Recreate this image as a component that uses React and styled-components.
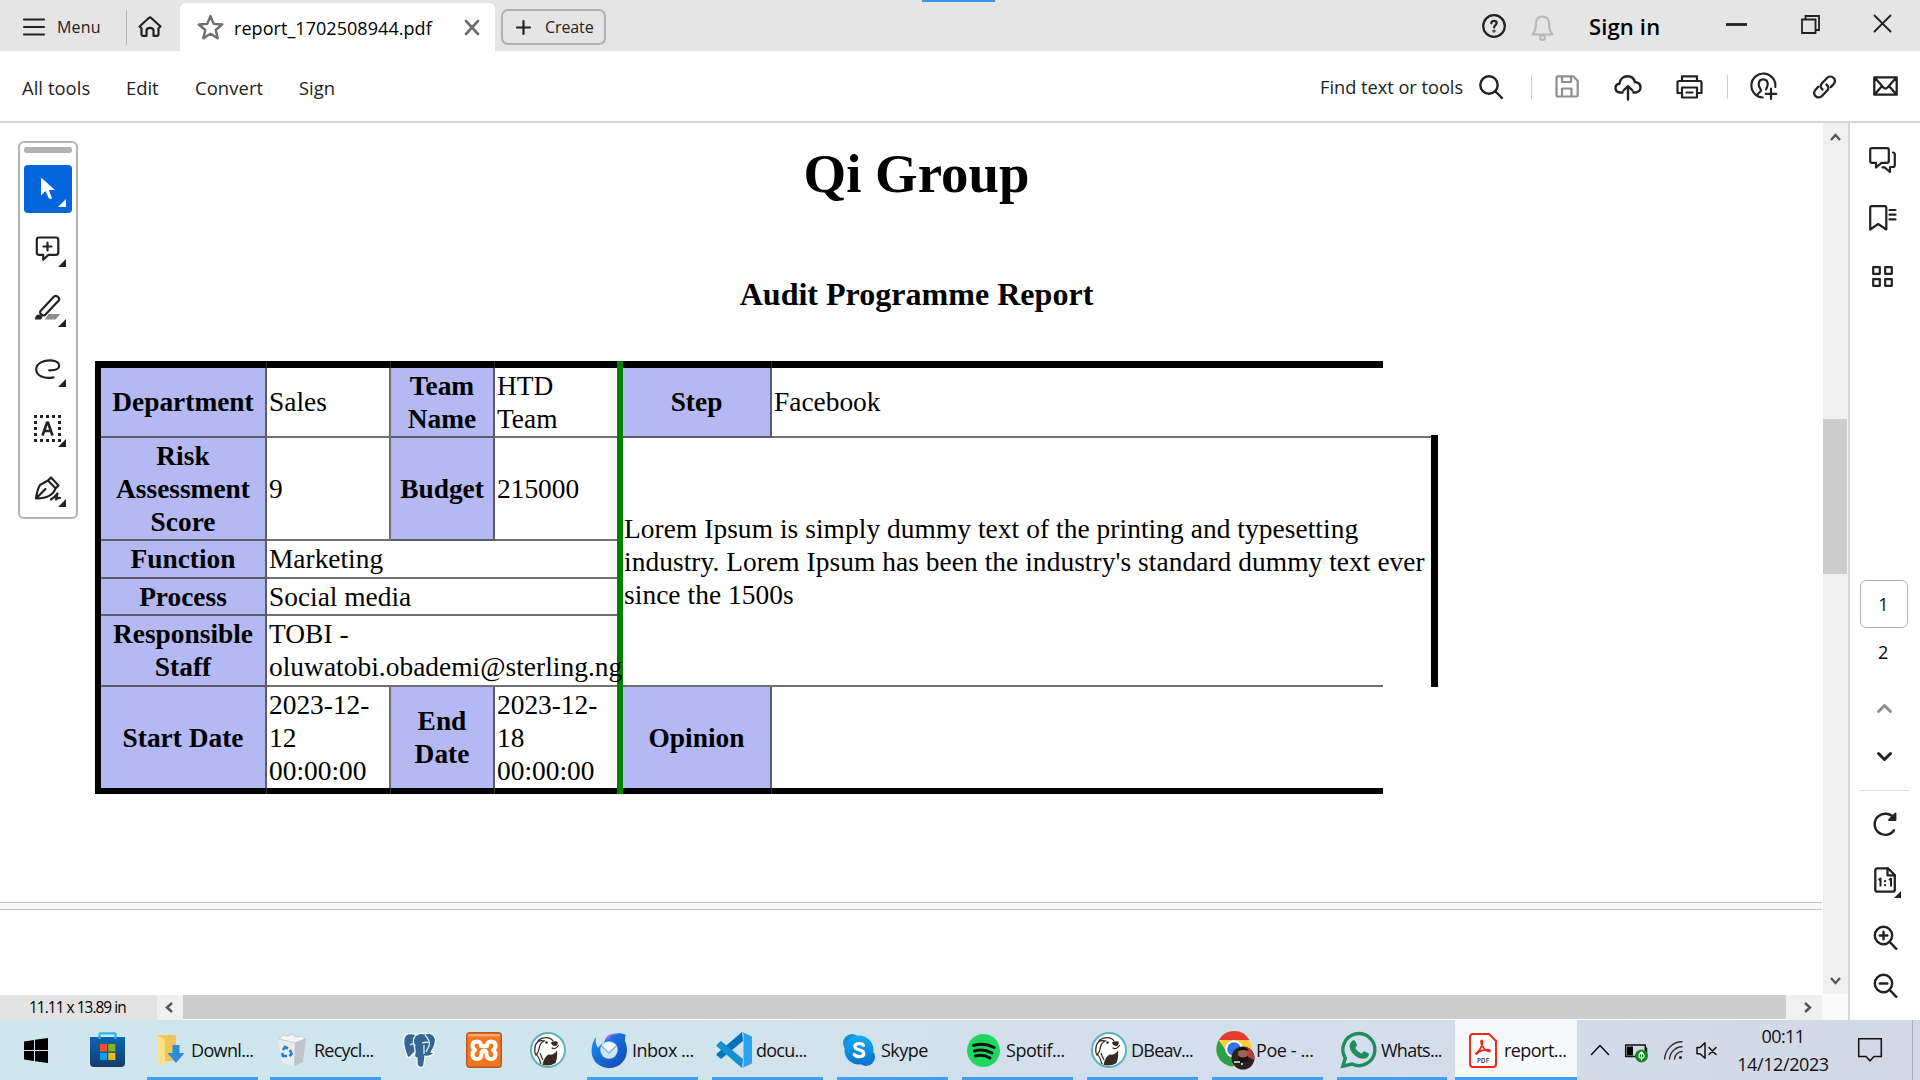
import React from "react";
import styled, { createGlobalStyle, css } from "styled-components";

const GlobalStyle = createGlobalStyle`
  * { box-sizing: border-box; }
  html, body { margin: 0; padding: 0; background: #fff; overflow: hidden; }
  svg { display: block; flex: none; }
`;

const ui = css`font-family: "Open Sans", "Noto Sans", sans-serif;`;
const INK = "#222";

const Window = styled.div`
  ${ui}
  width: 1920px;
  height: 1080px;
  display: flex;
  flex-direction: column;
  color: ${INK};
  background: #fff;
  overflow: hidden;
`;

const Label = styled.span`
  font-size: ${(p) => p.$size || 18}px;
  font-weight: ${(p) => p.$weight || 400};
  letter-spacing: ${(p) => p.$track || 0}px;
  color: ${(p) => p.$color || INK};
  margin-left: ${(p) => p.$ml || 0}px;
  margin-top: ${(p) => p.$mt || 0}px;
  width: ${(p) => (p.$w ? `${p.$w}px` : "auto")};
  line-height: 24px;
  white-space: nowrap;
  flex: none;
`;

const Svg = styled.svg.attrs((p) => ({
  width: p.$w,
  height: p.$h,
  viewBox: `0 0 ${p.$w} ${p.$h}`,
  fill: "none",
  strokeLinecap: "round",
  strokeLinejoin: "round",
}))`
  overflow: visible;
  margin-left: ${(p) => p.$ml || 0}px;
  margin-top: ${(p) => p.$mt || 0}px;
  stroke: ${(p) => p.$c || INK};
  stroke-width: ${(p) => p.$s || 2.2}px;
`;

const Art = styled.svg`
  overflow: visible;
  margin-left: ${(p) => p.$ml || 0}px;
`;

/* ---------- title bar ---------- */
const TitleBar = styled.header`
  height: 51px;
  flex: none;
  display: flex;
  align-items: flex-start;
  background: #e5e5e5;
  position: relative;
`;
const Accent = styled.div`
  position: absolute;
  left: 922px;
  top: 0;
  width: 73px;
  height: 2px;
  background: #3b95ea;
`;
const TitleDivider = styled.div`
  width: 1px;
  height: 35px;
  margin: 10px 0 0 26px;
  background: #b5b5b5;
`;
const Tab = styled.div`
  width: 315px;
  height: 48px;
  margin: 3px 0 0 18px;
  display: flex;
  align-items: flex-start;
  background: #fff;
  border-radius: 6px 6px 0 0;
`;
const CreateButton = styled.button`
  ${ui}
  width: 105px;
  height: 36px;
  margin: 9px 0 0 6px;
  padding: 0;
  border: 2px solid #b1b1b1;
  border-radius: 7px;
  background: transparent;
  display: flex;
  align-items: center;
`;
const TitleRight = styled.div`
  margin-left: auto;
  width: 438px;
  display: flex;
`;

/* ---------- tool bar ---------- */
const ToolBar = styled.nav`
  height: 72px;
  flex: none;
  display: flex;
  align-items: flex-start;
  border-bottom: 2px solid #d5d5d5;
`;
const ToolRight = styled.div`
  margin-left: auto;
  width: 600px;
  display: flex;
`;
const ToolDivider = styled.div`
  width: 1px;
  height: 24px;
  margin: 24px 0 0 ${(p) => p.$ml}px;
  background: #cfcfcf;
`;

/* ---------- body ---------- */
const Body = styled.div`
  height: 897px;
  flex: none;
  display: flex;
`;
const Viewer = styled.main`
  width: 1848px;
  display: flex;
  flex-direction: column;
`;
const ViewRow = styled.div`
  height: 871px;
  display: flex;
`;
const Canvas = styled.div`
  width: 1823px;
  height: 872px;
  display: flex;
  flex-direction: column;
  position: relative;
`;
const Page = styled.section`
  width: 1823px;
  height: 779px;
  overflow: hidden;
  font-family: "Liberation Serif", "Times New Roman", serif;
  color: #000;
`;
const PageGap = styled.div`
  width: 1822px;
  height: 8px;
  border-top: 1px solid #c6c6c6;
  border-bottom: 1px solid #c6c6c6;
  background: #f8f8f8;
`;
const Title = styled.h1`
  margin: 19px 0 0 10px;
  font-size: 54.8px;
  line-height: 64px;
  text-align: center;
`;
const Subtitle = styled.h2`
  margin: 69px 0 0 10px;
  font-size: 32.06px;
  line-height: 38px;
  text-align: center;
`;
const TableGrid = styled.div`
  margin: 48px 0 0 95px;
  width: 1343px;
  display: grid;
  grid-template-columns: 6px 166px 124px 104px 122px 6px 149px 611px 48px 7px;
  grid-template-rows: 7px 70px 103px 38px 37px 71px 101px 6px;
  font-size: 27.4px;
  line-height: 32.9px;
`;
const place = css`
  grid-column: ${(p) => p.$col};
  grid-row: ${(p) => p.$row};
`;
const Rule = styled.div`
  ${place}
  background: ${(p) => p.$bg || "#000"};
  margin-top: ${(p) => (p.$rise ? -p.$rise : 0)}px;
  border-right: ${(p) => (p.$tick ? "1px solid #333" : "none")};
`;
const Cell = styled.div`
  ${place}
  display: flex;
  align-items: center;
  white-space: pre;
  letter-spacing: ${(p) => p.$track || 0}px;
  padding-top: 1.6px;
  padding-left: ${(p) => (p.$pad === undefined ? 2 : p.$pad)}px;
  border-right: ${(p) => (p.$open ? "none" : "2px solid #707070")};
  border-bottom: ${(p) => (p.$last ? "none" : "2px solid #707070")};
`;
const Head = styled(Cell)`
  padding-left: 0;
  justify-content: center;
  text-align: center;
  font-weight: 700;
  background: #b5b9f3;
  border-color: #5c5c6c;
`;

/* ---------- floating quick tools ---------- */
const QuickTools = styled.aside`
  position: absolute;
  left: 18px;
  top: 18px;
  width: 60px;
  height: 378px;
  padding: 5px 4px 0;
  border: 2px solid #b3b3b3;
  border-radius: 6px;
  background: #fff;
  display: flex;
  flex-direction: column;
  gap: 12px;
`;
const Handle = styled.div`
  height: 6px;
  flex: none;
  border-radius: 3px;
  background: #b1b1b1;
  margin-top: -1px;
`;
const QuickButton = styled.div`
  height: 48px;
  flex: none;
  border-radius: 4px;
  background: ${(p) => (p.$active ? "#0265dc" : "transparent")};
`;

/* ---------- scroll bars ---------- */
const VScroll = styled.div`
  width: 25px;
  background: #f0f0f0;
  display: flex;
  flex-direction: column;
`;
const VThumb = styled.div`
  width: 24px;
  height: 155px;
  margin: 278px 0 403px;
  background: #cdcdcd;
`;
const HRow = styled.div`
  height: 26px;
  display: flex;
  padding-top: 1px;
`;
const Status = styled.div`
  width: 157px;
  height: 25px;
  padding: 1px 0 0 29px;
  background: #e3e3e3;
`;
const HButton = styled.div`
  width: ${(p) => p.$w}px;
  height: 25px;
  background: #f0f0f0;
`;
const HThumb = styled.div`
  width: 1603px;
  height: 24px;
  background: #cdcdcd;
`;
const Corner = styled.div`
  width: 26px;
  height: 26px;
  margin-top: -1px;
  background: #fafafa;
`;

/* ---------- right rail ---------- */
const Rail = styled.aside`
  width: 72px;
  border-left: 2px solid #d5d5d5;
  display: flex;
  flex-direction: column;
`;
const PageBox = styled.div`
  width: 48px;
  height: 48px;
  margin: 293px 0 0 10px;
  padding: 0 1px 1px 0;
  border: 1.5px solid #b1b1b1;
  border-radius: 6px;
  display: flex;
  align-items: center;
  justify-content: center;
`;
const RailLine = styled.div`
  width: 49px;
  height: 1px;
  margin: 29px 0 0 10px;
  background: #dedede;
`;

/* ---------- taskbar ---------- */
const Taskbar = styled.footer`
  height: 60px;
  flex: none;
  display: flex;
  background: linear-gradient(90deg, #cfe6ee 0, #d0e5ee 560px, #d3e0ec 1000px, #d3deec 1300px, #d4dbe8 1600px, #d2d8e6 1920px);
`;
const Task = styled.div`
  width: ${(p) => p.$w}px;
  margin-left: ${(p) => p.$ml || 0}px;
  padding-left: ${(p) => p.$pl || 0}px;
  height: 60px;
  flex: none;
  display: flex;
  align-items: center;
  background: ${(p) => (p.$active ? "#f6f8fc" : "transparent")};
  box-shadow: ${(p) => (p.$open ? "inset 0 -3px 0 #429eff" : "none")};
`;
const Clock = styled.div`
  width: 100px;
  margin-left: 11px;
  padding-top: 4px;
  display: flex;
  flex-direction: column;
  align-items: center;
  gap: 4px;
`;
const ShowDesktop = styled.div`
  width: 1px;
  height: 60px;
  margin-left: 30px;
  background: #a9b0bd;
`;

const Flyout = ({ c = INK }) => <path d="M42 34v8h-8z" fill={c} stroke="none" />;

const Dog = () => (
  <Art width="36" height="36" viewBox="0 0 36 36">
    <circle cx="18" cy="18" r="17" fill="#fff" stroke="#5bb5ba" strokeWidth="2" />
    <path d="M5.500 17c0-3 1.500-6 4-8M8 8.500c5-4 12-4 15 .5M22 16c2 1.500 5 0 6.500-2.500" fill="none" stroke="#382923" strokeWidth="1.200" strokeLinecap="round" />
    <path d="M14 9c-4-1-7 0-8.500 4-1 4-1 8 .5 10 1-1 2.500-3 3-6 .5-4 2-6.500 5-8z" fill="#fff" stroke="#382923" strokeWidth="1.300" />
    <path d="M12.500 33c1-4 2-8 6-10.500 3 .5 6 0 8.500-4 .5 5 0 9-1.500 12.500-4 2.500-8 3-13 2z" fill="#382923" />
    <path d="M6.500 22c2 3 3.500 6 4.500 10M10 21c1 3 2 5 3 7" fill="none" stroke="#382923" strokeWidth="1.200" />
    <path d="M21 10.500q3-2 6.500-1 .8 3-1.500 4.500-4.500 0-5-3.500z" fill="#382923" />
    <circle cx="16.500" cy="10.500" r="1.300" fill="#382923" />
  </Art>
);

const TaskLabel = ({ children, ml, track = -0.75 }) => (
  <Label $size={18} $track={track} $color="#111" $ml={ml}>{children}</Label>
);

function TopBar() {
  return (
    <TitleBar>
      <Accent />
      <Svg $w={21} $h={18} $ml={23} $mt={18}><path d="M1 1.500h20M1 9h20M1 16.500h20" /></Svg>
      <Label $size={16} $track={0.15} $ml={13} $mt={15} $w={43}>Menu</Label>
      <TitleDivider />
      <Svg $w={24} $h={21} $ml={11} $mt={16}>
        <path d="M1.500 10.500 10.800 2q1.200-1 2.400 0l9.300 8.500-2 1.800v6.200q0 1.300-1.300 1.300h-3.700v-5q0-3-3.500-3t-3.500 3v5H4.800q-1.300 0-1.300-1.300v-6.200z" />
      </Svg>
      <Tab>
        <Svg $w={27} $h={26} $ml={17} $mt={11} $c="#6e6e6e" $s={2.4}>
          <path d="m13.500 2 3.200 7.900 8.500.6-6.500 5.500 2 8.300-7.200-4.600-7.200 4.600 2-8.300L1.800 10.500l8.500-.6z" />
        </Svg>
        <Label $size={18} $track={0.05} $color="#000" $ml={10} $mt={13} $w={199}>report_1702508944.pdf</Label>
        <Svg $w={14} $h={15} $ml={32} $mt={17} $c="#6e6e6e" $s={2.6}><path d="m1 1 12 13M13 1 1 14" /></Svg>
      </Tab>
      <CreateButton>
        <Svg $w={15} $h={15} $ml={13}><path d="M7.500 1v13M1 7.500h13" /></Svg>
        <Label $size={16} $track={-0.1} $ml={14}>Create</Label>
      </CreateButton>
      <TitleRight>
        <Svg $w={24} $h={24} $mt={14}>
          <circle cx="12" cy="12" r="10.800" />
          <path d="M9.300 9.300q.2-2.500 2.700-2.500t2.700 2.300c0 1.700-2.600 2-2.600 4.300" />
          <circle cx="12" cy="17" r=".5" />
        </Svg>
        <Svg $w={23} $h={26} $ml={25} $mt={15} $c="#b8b8b8">
          <path d="M1.500 19.500h20c-2.600-3-3.300-5-3.300-9.500 0-5.500-2.500-8.500-6.700-8.500S4.800 4.500 4.800 10c0 4.500-.7 6.500-3.300 9.500z" />
          <circle cx="11.500" cy="22.700" r="2.300" />
        </Svg>
        <Label $size={22} $weight={600} $track={0.15} $color="#000" $ml={35} $mt={14} $w={72}>Sign in</Label>
        <Svg $w={21} $h={3} $ml={65} $mt={23} $s={2.8}><path d="M0 1.500h21" strokeLinecap="butt" /></Svg>
        <Svg $w={19} $h={19} $ml={54} $mt={15} $s={1.8}>
          <path d="M4.500 4.300V1H18v14h-3.300M1 4.500h13.500V18H1z" strokeLinejoin="miter" />
        </Svg>
        <Svg $w={17} $h={17} $ml={54} $mt={15} $s={1.8}><path d="m.5.5 16 16M16.500.5l-16 16" /></Svg>
      </TitleRight>
    </TitleBar>
  );
}

function Tools() {
  return (
    <ToolBar>
      <Label $size={18.4} $track={0.05} $ml={22} $mt={25} $w={104}>All tools</Label>
      <Label $size={18.4} $mt={25} $w={69}>Edit</Label>
      <Label $size={18.4} $track={0.1} $mt={25} $w={104}>Convert</Label>
      <Label $size={18.4} $mt={25}>Sign</Label>
      <ToolRight>
        <Label $size={18.2} $mt={24} $w={144}>Find text or tools</Label>
        <Svg $w={24} $h={24} $ml={15} $mt={24} $s={2.4}><circle cx="10" cy="10" r="8.700" /><path d="m16.500 16.500 6.500 6.500" /></Svg>
        <ToolDivider $ml={28} />
        <Svg $w={24} $h={23} $ml={23} $mt={24} $c="#8e8e8e">
          <path d="M1.500 2.500q0-1.200 1.200-1.200h15.500l4.500 4.500v14.500q0 1.200-1.200 1.200H2.700q-1.200 0-1.200-1.200zM7 1.500v5.500h9V1.500M7 21.500V13.500h9.500v8" />
        </Svg>
        <Svg $w={28} $h={25} $ml={35} $mt={24} $s={2.4}>
          <path d="M8.500 17.500H6q-4.500-.3-4.500-4.500 0-3.800 4-4.300C6 4 9.500 1.300 13.500 1.300c3.800 0 6.500 2 7.300 5.700 3.500.3 5.700 2.500 5.700 5.500 0 3-2.200 5-5.500 5h-1.500M14 24.500V12M9.500 15.500l4.500-4.300 4.500 4.300" />
        </Svg>
        <Svg $w={27} $h={24} $ml={34} $mt={24} $s={2.2}>
          <path d="M6 6V1.300h15V6M6 18H1.500V7.500q0-1.500 1.500-1.500h21q1.500 0 1.500 1.500V18H21M6 12.500h15v10H6zM10.500 17.500h6" />
        </Svg>
        <ToolDivider $ml={24} />
        <Svg $w={27} $h={26} $ml={22} $mt={22} $s={2.2}>
          <path d="M25.300 14a12 12 0 1 0-12.500 10.500M7.500 22.300c0-2.500 3.500-3 3.500-5 0-1.300-2.300-2.800-2.300-6 0-3 1.600-5 4.500-5s4.500 2 4.500 5c0 2.500-1.200 4-1.700 5M21 15.500v10.500M15.700 20.800h10.600" />
        </Svg>
        <Svg $w={25} $h={24} $ml={35} $mt={24} $s={2.3}>
          <path d="M10.500 14.500c-2.500-2-2.300-4.500-.5-6.300l4.800-5c2-2 4.800-2.200 6.700-.4s1.900 4.500 0 6.500l-2.700 2.800M14.500 9.500c2.500 2 2.300 4.500.5 6.300l-4.800 5c-2 2-4.800 2.200-6.700.4s-1.900-4.500 0-6.500l2.700-2.800" />
        </Svg>
        <Svg $w={25} $h={20} $ml={36} $mt={25} $s={2.3}>
          <path d="M1.300 1.300h22.400v17.400H1.300zM2 2l8.500 9.500q2 2 4 0L23 2M1.800 18.200l7-8M23.200 18.200l-7-8" />
        </Svg>
      </ToolRight>
    </ToolBar>
  );
}

function Quick() {
  return (
    <QuickTools>
      <Handle />
      <QuickButton $active>
        <Svg $w={48} $h={48}><path d="M17 12.500v18l4.500-4.500 3.500 7.500q1.500 1.200 3-.5L24.700 25H31z" fill="#fff" stroke="none" /><Flyout c="#fff" /></Svg>
      </QuickButton>
      <QuickButton>
        <Svg $w={48} $h={48}>
          <path d="M15 12.500h17q2.300 0 2.300 2.300v12.700q0 2.300-2.300 2.300h-7.500l-5.300 5v-5H15q-2.200 0-2.200-2.300V14.800q0-2.300 2.200-2.300zM23.500 17.500v8M19.500 21.500h8" /><Flyout />
        </Svg>
      </QuickButton>
      <QuickButton>
        <Svg $w={48} $h={48}>
          <path d="M16.500 26 30 11.500q1.800-1.400 3.500 0l1 1q1.400 1.600 0 3.300L21 30q-1.500 1-3 0l-1.500-1.500q-1-1.200 0-2.500z" />
          <path d="M11 34.500q0-5.500 5-5l2.500 2.500-1.500 2.500z" fill={INK} stroke="none" />
          <path d="M24.500 29h12l-5 5.500h-11z" fill="#8e8e8e" stroke="none" /><Flyout />
        </Svg>
      </QuickButton>
      <QuickButton>
        <Svg $w={48} $h={48}><path d="M29.500 32.300c-9.500 1.800-17-1.300-17.300-7.500C12 18 20 15 27 15.300c5.500.3 8.500 2.700 8.200 5.700-.3 2.700-4 4.500-10 4.300" /><Flyout /></Svg>
      </QuickButton>
      <QuickButton>
        <Svg $w={48} $h={48}>
          <rect x="11.500" y="11.500" width="24" height="24" strokeWidth="3" strokeDasharray="3 3" strokeDashoffset="1.500" strokeLinecap="butt" strokeLinejoin="miter" />
          <path d="m18.500 30.500 4.500-13h1l4.500 13M20 26h7" strokeWidth="2.600" strokeLinecap="butt" /><Flyout />
        </Svg>
      </QuickButton>
      <QuickButton>
        <Svg $w={48} $h={48}>
          <path d="M12 33.500c.8-6 1.800-10 4-13.500L24 15.500l7.500 7.800c-2 7-8 10-19 10.200zM12.500 33l9-9M24 15.500l3-3 7.500 8-3 3M27 34.500c3-1.500 5-4 6.500-6l-1.500 6c1.500-1.500 2.500-2 4-1.500" /><Flyout />
        </Svg>
      </QuickButton>
    </QuickTools>
  );
}

function Report() {
  return (
    <Page>
      <Title>Qi Group</Title>
      <Subtitle>Audit Programme Report</Subtitle>
      <TableGrid>
        <Rule $col="1" $row="1 / 9" />
        <Rule $col="2" $row="1" $tick /><Rule $col="3" $row="1" $tick /><Rule $col="4" $row="1" $tick />
        <Rule $col="5" $row="1" /><Rule $col="7" $row="1" $tick /><Rule $col="8" $row="1" />
        <Rule $col="2" $row="8" $tick /><Rule $col="3" $row="8" $tick /><Rule $col="4" $row="8" $tick />
        <Rule $col="5" $row="8" /><Rule $col="7" $row="8" $tick /><Rule $col="8" $row="8" />
        <Rule $col="6" $row="1 / 9" $bg="#008000" />
        <Rule $col="10" $row="3 / 7" $rise={3} />

        <Head $col="2" $row="2">Department</Head>
        <Cell $col="3" $row="2">Sales</Cell>
        <Head $col="4" $row="2">{"Team\nName"}</Head>
        <Cell $col="5" $row="2" $open>{"HTD\nTeam"}</Cell>
        <Head $col="7" $row="2">Step</Head>
        <Cell $col="8" $row="2" $open>Facebook</Cell>
        <Cell $col="9" $row="2" $open />

        <Head $col="2" $row="3">{"Risk\nAssessment\nScore"}</Head>
        <Cell $col="3" $row="3">9</Cell>
        <Head $col="4" $row="3">Budget</Head>
        <Cell $col="5" $row="3" $open>215000</Cell>
        <Cell $col="7 / 9" $row="3 / 7" $pad={1} $track={0.06} $open>
          {"Lorem Ipsum is simply dummy text of the printing and typesetting\nindustry. Lorem Ipsum has been the industry's standard dummy text ever\nsince the 1500s"}
        </Cell>

        <Head $col="2" $row="4">Function</Head>
        <Cell $col="3 / 6" $row="4" $open>Marketing</Cell>
        <Head $col="2" $row="5">Process</Head>
        <Cell $col="3 / 6" $row="5" $open>Social media</Cell>
        <Head $col="2" $row="6">{"Responsible\nStaff"}</Head>
        <Cell $col="3 / 6" $row="6" $track={0.03} $open>{"TOBI -\noluwatobi.obademi@sterling.ng"}</Cell>

        <Head $col="2" $row="7" $last>Start Date</Head>
        <Cell $col="3" $row="7" $last>{"2023-12-\n12\n00:00:00"}</Cell>
        <Head $col="4" $row="7" $last>{"End\nDate"}</Head>
        <Cell $col="5" $row="7" $last $open>{"2023-12-\n18\n00:00:00"}</Cell>
        <Head $col="7" $row="7" $last>Opinion</Head>
      </TableGrid>
    </Page>
  );
}

function SideRail() {
  return (
    <Rail>
      <Svg $w={27} $h={26} $ml={19} $mt={24} $s={2.2}>
        <path d="M3 1.200h15q1.800 0 1.800 1.800v11q0 1.800-1.800 1.800h-5.500l-5.500 4.700v-4.700H3q-1.800 0-1.800-1.800V3q0-1.800 1.800-1.800z" />
        <path d="M24 5.500q1.800.3 1.800 2V18q0 2-1.800 2h-3v5l-5.500-4.700h-2" />
      </Svg>
      <Svg $w={27} $h={26} $ml={19} $mt={32} $s={2.2}>
        <path d="M1.200 2.500q0-1.300 1.300-1.300h13.500q1.300 0 1.300 1.300v22L9.200 19l-8 5.500z" />
        <path d="M20.500 5h6M20.500 9.700h6M20.500 14.400h6" />
      </Svg>
      <Svg $w={21} $h={21} $ml={22} $mt={35} $s={2.2}>
        <path d="M1.200 1.200h6.600v6.600H1.200zM13.200 1.200h6.600v6.600h-6.600zM1.200 13.200h6.600v6.600H1.200zM13.200 13.200h6.600v6.600h-6.600z" />
      </Svg>
      <PageBox><Label $size={18} $color="#111">1</Label></PageBox>
      <Label $size={18} $color="#000" $ml={28} $mt={12}>2</Label>
      <Svg $w={15} $h={9} $ml={27} $mt={40} $c="#8e8e8e" $s={3}><path d="m1.500 7.500 6-6 6 6" /></Svg>
      <Svg $w={15} $h={9} $ml={27} $mt={39} $s={3}><path d="m1.500 1.500 6 6 6-6" /></Svg>
      <RailLine />
      <Svg $w={24} $h={24} $ml={23} $mt={21} $s={2.4}>
        <path d="M21 18.300a10.600 10.600 0 1 1 0-12" /><path d="M22.500 1.500V8h-6.500z" fill={INK} strokeWidth="1.800" />
      </Svg>
      <Svg $w={22} $h={26} $ml={24} $mt={31} $s={2.3}>
        <path d="M3.500 1.300H14l6.800 6.800v14.400q0 2.200-2.200 2.200H3.500q-2.200 0-2.200-2.200v-19q0-2.200 2.200-2.200z" />
        <path d="M13.500 1.500v6.800h7" />
        <path d="m4.500 13 2-1.500v8M15 13l2-1.500v8" strokeWidth="2" strokeLinecap="butt" /><path d="M11 14v.2M11 18v.2" strokeWidth="2.200" />
        <path d="M27 24v7h-7z" fill={INK} stroke="none" />
      </Svg>
      <Svg $w={24} $h={24} $ml={23} $mt={33} $s={2.4}>
        <circle cx="10.500" cy="9.500" r="8.700" /><path d="m16.800 16 6.500 6.800M10.500 5.800v7.500M6.800 9.500h7.500" />
      </Svg>
      <Svg $w={24} $h={24} $ml={23} $mt={24} $s={2.4}>
        <circle cx="10.500" cy="9.500" r="8.700" /><path d="m16.800 16 6.500 6.800M6.800 9.500h7.500" />
      </Svg>
    </Rail>
  );
}

function Tasks() {
  return (
    <Taskbar>
      <Task $w={60}>
        <Art $ml={24} width="24" height="25" viewBox="0 0 24 25" fill="#000"><path d="M0 3.500 10 2v10H0zM11 1.800 24 0v12H11zM0 13h10v10L0 21.500zM11 13h13v12l-13-1.800z" /></Art>
      </Task>
      <Task $w={65} $ml={22}>
        <Art $ml={8} width="35" height="36" viewBox="0 0 35 36">
          <defs><linearGradient id="store" x1="0" y1="0" x2="0" y2="1"><stop stopColor="#0b66b3" /><stop offset="1" stopColor="#153a6b" /></linearGradient></defs>
          <path d="M0 5h35v26q0 4-4 4H4q-4 0-4-4z" fill="url(#store)" /><path d="M9.500 7V2q0-.7.700-.7h14.600q.7 0 .7.700v5" fill="none" stroke="#23b9f4" strokeWidth="2.200" />
          <path d="M10 12h7v7.500h-7z" fill="#f25022" /><path d="M18.300 12h7v7.500h-7z" fill="#7fba00" /><path d="M10 20.800h7V28h-7z" fill="#00a4ef" /><path d="M18.300 20.800h7V28h-7z" fill="#ffb900" />
        </Art>
      </Task>
      <Task $w={111} $open>
        <Art $ml={10} width="28" height="32" viewBox="0 0 28 32">
          <path d="M0 1h17q2 0 2 2v24H0z" fill="#f0c659" /><path d="M0 1l8 4.500V32l-7-3.500q-1-.5-1-1.500z" fill="#fde08a" />
          <path d="M15.500 11h7v8h5L19 29l-8.500-10h5z" fill="#2f8be0" />
        </Art>
        <TaskLabel ml={6} track={-0.65}>Downl...</TaskLabel>
      </Task>
      <Task $w={111} $ml={12} $open>
        <Art $ml={8} width="28" height="32" viewBox="0 0 28 32">
          <path d="M0 5 17 8 16 32 3.500 29z" fill="#e9ebed" /><path d="M17 8 28 4.500 25 28l-9 4z" fill="#bfc4c8" />
          <path d="M1 5 5 1l5 1 4-2 4 3 6-1 3 3-10 4z" fill="#f4f5f6" stroke="#b8bcc0" strokeWidth=".7" />
          <path d="m5 16 2-3 3 1.500M12 16l1.500 4-2 2M9 22H5l-1-3" fill="none" stroke="#1683dc" strokeWidth="2.600" />
        </Art>
        <TaskLabel ml={8}>Recycl...</TaskLabel>
      </Task>
      <Task $w={63}>
        <Art $ml={22} width="33" height="35" viewBox="0 0 33 35">
          <path d="M5 1C-1 3 0 11 3 20c1 4 3 6 5 3l4-4c0 3-2 5 2 6v5c0 5 7 6 7 1l1-8c3 1 8-1 9-3l-3-1c4-5 6-13 3-16-2-3-7-3-9-2-3-1-7-1-8 1-3-1-6-2-9-1z" fill="#336791" stroke="#fff" strokeWidth="1.200" />
          <path d="M13 2c-3 3-3 7-2 10s1 5 1 7M22 2c4 4 5 8 4 11l-3 6M19 10c3-1 6-1 6 0M7 12c3-2 5-1 5 1M21 21v-9" fill="none" stroke="#e3eef4" strokeWidth="1.300" />
        </Art>
      </Task>
      <Task $w={64}>
        <Art $ml={22} width="36" height="36" viewBox="0 0 36 36">
          <rect x=".7" y=".7" width="34.600" height="34.600" rx="3" fill="#f37623" stroke="#b9571d" strokeWidth="1.400" />
          <path d="M2 2h32v2.500H2z" fill="#f8a878" />
          <path d="M11 9.500q4 0 4 4.500h6q0-4.500 4-4.500 4.500 0 4.500 4 0 3-2.500 4.500 2.500 1.500 2.500 4.500 0 4.500-4.500 4.500t-4.500-5q0-3.500-2.500-3.500t-2.500 3.500q0 5-4.500 5t-4.500-4.500q0-3 2.500-4.500-2.500-1.500-2.500-4.500 0-4 4.500-4z" fill="none" stroke="#fff" strokeWidth="4" strokeLinejoin="round" />
        </Art>
      </Task>
      <Task $w={79} $pl={22}><Dog /></Task>
      <Task $w={111} $open>
        <Art $ml={4} width="36" height="36" viewBox="0 0 36 36">
          <defs><linearGradient id="bird" x1="0" y1="0" x2="1" y2="1"><stop stopColor="#1b91f3" /><stop offset="1" stopColor="#1246b3" /></linearGradient></defs>
          <path d="M5 5c-4 5-5 12-4 18 2 8 9 13 17 13 11 0 18-8 18-18 0-4-1-7-2-9 0-3 0-5 1-6-4-2-8-2-12-1-6 1-9 4-10 9-3 1-5 3-6 5-2-3-3-7-2-11z" fill="url(#bird)" />
          <path d="M14 8c2-5 7-7 12-6-4 1-6 2-8 5z" fill="#8c6be8" />
          <circle cx="18" cy="18" r="8.700" fill="#cfe6fa" /><path d="M10.500 13.500q7.500-7 15 0L18.500 21q-.7.600-1.400 0z" fill="#f4f9fe" /><path d="m10.500 14 7.300 7 7.400-7" fill="none" stroke="#7fb4ec" strokeWidth="1.300" />
        </Art>
        <TaskLabel ml={5} track={-0.5}>Inbox ...</TaskLabel>
      </Task>
      <Task $w={111} $ml={14} $open>
        <Art $ml={4} width="36" height="36" viewBox="0 0 36 36">
          <path d="m26 0 1 9L5 27l-4-3.500q-1-1 0-2z" fill="#0072b9" /><path d="M5 9 27 27l-1 9L1 14.500q-1-1 0-2z" fill="#1590d5" /><path d="m26 0 9 4q1 .5 1 1.500v25q0 1-1 1.500l-9 4q1.500-1 1.500-3V3q0-2-1.500-3z" fill="#2aa3ef" />
        </Art>
        <TaskLabel ml={4}>docu...</TaskLabel>
      </Task>
      <Task $w={111} $ml={14} $open>
        <Art $ml={6} width="32" height="32" viewBox="0 0 32 32">
          <defs><linearGradient id="sky" x1="0" y1="0" x2="0" y2="1"><stop stopColor="#13adf0" /><stop offset="1" stopColor="#0674d4" /></linearGradient></defs>
          <circle cx="9" cy="9" r="9" fill="#1492d8" /><circle cx="23" cy="23" r="9" fill="#0878d4" /><circle cx="16" cy="16" r="14.500" fill="url(#sky)" />
          <path d="M20.500 11.300c-1.500-2.300-8.700-2.600-8.700 1.200 0 4.500 9 2 9 7 0 4-7.500 4-9.600 1" fill="none" stroke="#fff" strokeWidth="3.200" strokeLinecap="round" />
        </Art>
        <TaskLabel ml={6} track={-0.5}>Skype</TaskLabel>
      </Task>
      <Task $w={111} $ml={14} $open>
        <Art $ml={5} width="33" height="33" viewBox="0 0 33 33">
          <circle cx="16.500" cy="16.500" r="16.500" fill="#1ed760" /><path d="M6.500 11.500q11-3.200 20.500 2M7.500 17q9-2.500 17.500 2M8.500 22q7.500-2 14.500 2" fill="none" stroke="#111" strokeWidth="3" strokeLinecap="round" />
        </Art>
        <TaskLabel ml={6} track={-0.45}>Spotif...</TaskLabel>
      </Task>
      <Task $w={111} $ml={14} $pl={4} $open>
        <Dog />
        <TaskLabel ml={4}>DBeav...</TaskLabel>
      </Task>
      <Task $w={111} $ml={14} $open>
        <Art $ml={4} width="38" height="38" viewBox="0 0 38 38">
          <circle cx="18" cy="18" r="17.500" fill="#ffcd40" /><path d="M2.800 9a17.500 17.500 0 0 1 30.700 0H18z" fill="#e33b2e" /><path d="M2.800 9A17.500 17.500 0 0 0 17 35.500L26 22 10 20z" fill="#2c9f4b" />
          <circle cx="18" cy="18" r="8.800" fill="#fff" /><circle cx="18" cy="18" r="6.800" fill="#2c74e8" />
          <circle cx="27" cy="27" r="11.500" fill="#2b211f" /><path d="M29 16a11.500 11.500 0 0 1 9.300 13l-6-3z" fill="#b8403a" /><ellipse cx="27" cy="22.500" rx="5" ry="5.500" fill="#9a6450" /><path d="M22 18q5-4 10 0l-.5 2q-4-2-9 0zM22.500 25q4.500 3 9 0l1 6H22z" fill="#17110f" />
          <path d="M18 31h6M25 33h2" stroke="#bbb" strokeWidth="2" />
        </Art>
        <TaskLabel ml={2} track={-0.4}>Poe - ...</TaskLabel>
      </Task>
      <Task $w={110} $ml={14} $open>
        <Art $ml={4} width="36" height="36" viewBox="0 0 36 36">
          <path d="M1.800 34.200 4.300 26A16 16 0 1 1 11 32z" fill="none" stroke="#1f8d5b" strokeWidth="3.400" />
          <path d="M11 9q2-1.500 3.500.5l1.500 3.500q0 1-1.800 3 2 4 6.300 5.800l2.500-2.500q5.500 2 5 3-1 4.500-6 4.500C14 26.500 8.500 18.500 8.500 14q0-3 2.500-5z" fill="#1f8d5b" />
        </Art>
        <TaskLabel ml={4}>Whats...</TaskLabel>
      </Task>
      <Task $w={122} $ml={8} $active $open>
        <Art $ml={14} width="28" height="35" viewBox="0 0 28 35">
          <path d="M4 1h16l7 7v23q0 3-3 3H4q-3 0-3-3V4q0-3 3-3z" fill="#fff" stroke="#ee2a1c" strokeWidth="2" />
          <path d="M7 20.500c3-2 7-8 6.500-12q-1-2-1.500 0c0 4 4 9.500 8 10 2 0 1-2-1.500-1.800C14 17 10 18.500 8 20.500q-1 1-1 0z" fill="none" stroke="#ee2a1c" strokeWidth="1.800" />
          <text x="14" y="30" textAnchor="middle" fontFamily="Open Sans, sans-serif" fontWeight="600" fontSize="6.500" fill="#333">PDF</text>
        </Art>
        <TaskLabel ml={7} track={-0.55}>report...</TaskLabel>
      </Task>
      <Task $w={145}>
        <Svg $w={18} $h={10} $ml={14} $c="#111" $s={1.5}><path d="m.5 9.500 8.500-9 8.500 9" /></Svg>
        <Svg $w={23} $h={18} $ml={16} $mt={5} $c="#111" $s={1.5}>
          <path d="M.7 1h19.600v11.500H.7zM21.500 4v5" /><path d="M2 2.500h6v9H2z" fill="#000" stroke="none" />
          <circle cx="16.500" cy="12" r="6.500" fill="#108a1c" stroke="none" /><path d="M16.500 16V9.500m0-1.500q-3 2.500-2.500 5 1 1.500 2.500 1.500t2.500-1.500q.5-2.500-2.500-5z" stroke="#fff" strokeWidth="1.200" />
        </Svg>
        <Svg $w={19} $h={19} $ml={16} $c="#333" $s={1.4}>
          <path d="M.7 18A17.500 17.500 0 0 1 18 .8M5.500 18A13 13 0 0 1 18 5.800M10.500 18a8 8 0 0 1 7.500-7.500" /><circle cx="16.500" cy="16.500" r="1.500" fill="#111" stroke="none" />
        </Svg>
        <Svg $w={21} $h={17} $ml={13} $c="#111" $s={1.5}><path d="M1 5.500h3L9 .8v15.400l-5-4.500H1zM13 5.500l7 7M20 5.500l-7 7" /></Svg>
      </Task>
      <Clock>
        <Label $size={18} $track={-0.6} $color="#111">00:11</Label>
        <Label $size={18} $track={-0.4} $color="#111">14/12/2023</Label>
      </Clock>
      <Svg $w={24} $h={24} $ml={25} $mt={18} $c="#111" $s={1.5}><path d="M.7.700h22.600v17.800H16l-4 4.300-4-4.300H.7z" strokeLinejoin="miter" /></Svg>
      <ShowDesktop />
    </Taskbar>
  );
}

export default function App() {
  return (
    <Window>
      <GlobalStyle />
      <TopBar />
      <Tools />
      <Body>
        <Viewer>
          <ViewRow>
            <Canvas>
              <Report />
              <PageGap />
              <Quick />
            </Canvas>
            <VScroll>
              <Svg $w={11} $h={8} $ml={7} $mt={10} $c="#555" $s={2.4}><path d="m1 7 4.500-5L10 7" strokeLinecap="butt" strokeLinejoin="miter" /></Svg>
              <VThumb />
              <Svg $w={11} $h={8} $ml={7} $c="#555" $s={2.4}><path d="m1 1 4.500 5L10 1" strokeLinecap="butt" strokeLinejoin="miter" /></Svg>
            </VScroll>
          </ViewRow>
          <HRow>
            <Status><Label $size={15.4} $track={-0.95} $color="#000">11.11 x 13.89 in</Label></Status>
            <HButton $w={26}><Svg $w={8} $h={11} $ml={8} $mt={7} $c="#555" $s={2.4}><path d="M7 1 2 5.500 7 10" strokeLinecap="butt" strokeLinejoin="miter" /></Svg></HButton>
            <HThumb />
            <HButton $w={36}><Svg $w={8} $h={11} $ml={18} $mt={7} $c="#555" $s={2.4}><path d="m1 1 5 4.500L1 10" strokeLinecap="butt" strokeLinejoin="miter" /></Svg></HButton>
            <Corner />
          </HRow>
        </Viewer>
        <SideRail />
      </Body>
      <Tasks />
    </Window>
  );
}
